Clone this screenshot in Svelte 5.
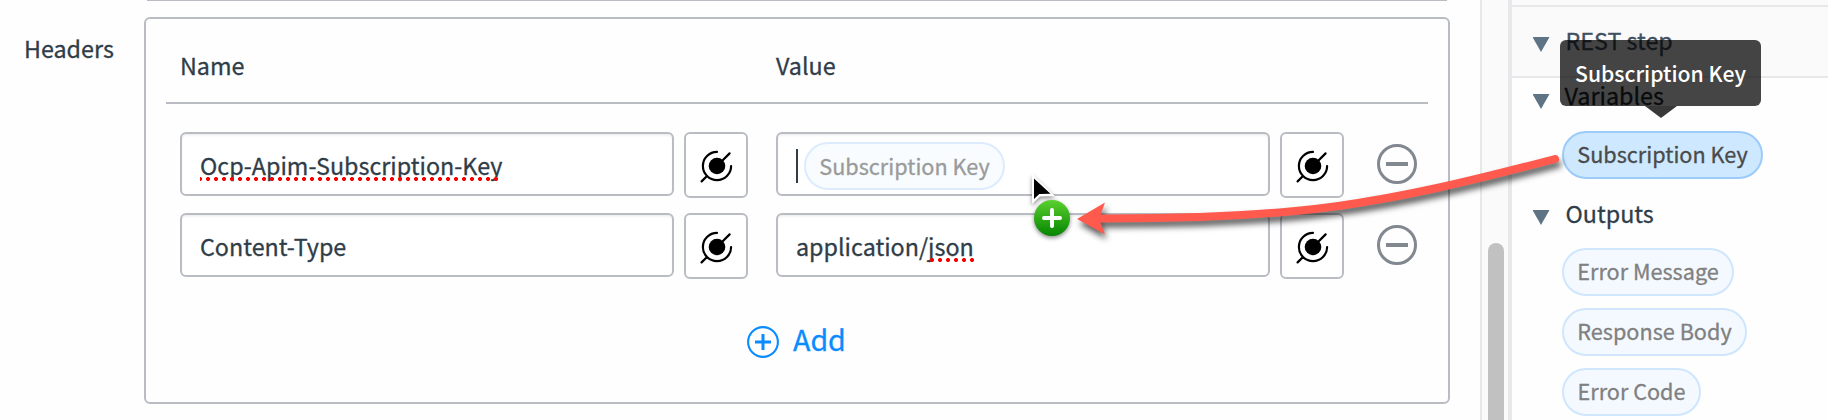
<script>
  const rows = [
    { name: 'Ocp-Apim-Subscription-Key', misspelled: true, token: 'Subscription Key' },
    { name: 'Content-Type', value: 'application/', flagged: 'json' }
  ];
  const outputs = [
    { label: 'Error Message', width: 172 },
    { label: 'Response Body', width: 185 },
    { label: 'Error Code', width: 139 }
  ];
</script>

{#snippet plug()}
  <button class="plug" aria-label="Bind value">
    <svg width="36" height="36" viewBox="0 0 36 36">
      <circle cx="18" cy="18" r="8.3" />
      <path d="M18 3.9A14.1 14.1 0 1 0 32.1 18M18 18L30.6 5.4M8 28L2.6 33.4" fill="none" stroke="#000" stroke-width="2.2" stroke-linecap="round" />
    </svg>
  </button>
{/snippet}

<div class="page">
  <main>
    <div class="label">Headers</div>
    <div class="fields">
      <div class="previous"></div>
      <section class="panel">
        <div class="heads"><span>Name</span><span>Value</span></div>
        {#each rows as row}
          <div class="row">
            <div class="input"><span class:spell={row.misspelled}>{row.name}</span></div>
            {@render plug()}
            <div class="input second">
              {#if row.token}
                <i class="caret"></i><span class="pill ghost">{row.token}</span>
              {:else}
                <span>{row.value}</span><span class="spell short">{row.flagged}</span>
              {/if}
            </div>
            {@render plug()}
            <svg class="minus" width="40" height="40" viewBox="0 0 40 40">
              <circle cx="20" cy="20" r="18.5" fill="none" stroke="#818890" stroke-width="3" />
              <path d="M9 20H31" stroke="#818890" stroke-width="4" />
            </svg>
          </div>
        {/each}
        <div class="add">
          <svg width="32" height="32" viewBox="0 0 32 32" fill="none" stroke="#0a8cff">
            <circle cx="16" cy="16" r="14.9" stroke-width="2.1" />
            <path d="M8 16H24M16 8V24" stroke-width="3" />
          </svg>
          <span>Add</span>
        </div>
      </section>
    </div>
  </main>
  <div class="track"><div class="thumb"></div></div>
  <aside>
    <div class="strip"></div>
    <div class="group step"><i class="tri"></i><span>REST step</span></div>
    <div class="group vars"><i class="tri"></i><span>Variables</span></div>
    <div class="source">
      <span class="pill active">Subscription Key</span>
      <div class="tooltip">Subscription Key</div>
    </div>
    <div class="group outs"><i class="tri"></i><span>Outputs</span></div>
    <div class="list">
      {#each outputs as output}
        <span class="pill" style="width: {output.width}px">{output.label}</span>
      {/each}
    </div>
  </aside>
  <svg class="overlay" width="1828" height="420" viewBox="0 0 1828 420">
    <defs>
      <linearGradient id="green" x1="0" y1="0" x2="0" y2="1">
        <stop offset="0" stop-color="#5bd12f" /><stop offset="1" stop-color="#058500" />
      </linearGradient>
    </defs>
    <g class="arrow">
      <path d="M1098 218.5C1300 219 1380 205 1555 159" fill="none" stroke="#ff5a4d" stroke-width="8" stroke-linecap="round" />
      <path d="M1077 219L1105 202.5L1099 219L1105 234.5Z" fill="#ff5a4d" />
    </g>
    <g class="cursor">
      <path d="M1032 174V204L1040 196.5L1055 196Z" fill="#fff" />
      <path d="M1034 178.5V199L1039.3 194L1050.5 193.7Z" />
      <circle cx="1052" cy="218" r="18" fill="url(#green)" />
      <path d="M1044 218H1060M1052 210V226" stroke="#fff" stroke-width="4" stroke-linecap="round" />
    </g>
  </svg>
</div>

<style>
  :global(body) { margin: 0; background: #fff; overflow: hidden; }
  * { box-sizing: border-box; }
  .page {
    position: relative; display: flex; width: 1828px; height: 420px; overflow: hidden;
    font-family: "Noto Sans CJK SC", sans-serif; font-size: 23.3px; line-height: 30px;
    color: #2f3d48; white-space: nowrap; -webkit-text-stroke: .3px currentColor;
  }
  main { display: flex; width: 1480px; background: #fefefe; }
  .label { width: 144px; padding: 33px 0 0 24px; }
  .fields { width: 1306px; }
  .previous { height: 1px; margin: 0 3px 16px; background: #b9bdc3; }
  .panel { height: 387px; border: 2px solid #b9bdc3; border-radius: 6px; padding: 31px 20px 0; }
  .heads { display: grid; grid-template-columns: 596px 1fr; height: 54px; padding-left: 14px; border-bottom: 2px solid #b9bdc3; margin-bottom: 28px; }
  .row { display: flex; align-items: flex-start; height: 81px; padding-left: 14px; }
  .input {
    display: flex; align-items: center; width: 494px; height: 64px; padding: 2px 0 0 18px;
    border: 2px solid #b9bdc3; border-radius: 6px; background: #fff; box-shadow: inset 0 2px 3px -1px #e8e8e8;
  }
  .second { margin-left: 28px; }
  .spell { position: relative; }
  .spell::after {
    content: ""; position: absolute; left: 0; right: 0; bottom: -1px; height: 4px;
    background: radial-gradient(circle, #f00 1.7px, transparent 2.3px) -4px 0 / 8px 4px repeat-x;
  }
  .short::after { background-position-x: 0; }
  .plug {
    display: grid; place-items: center; width: 64px; height: 66px; margin-left: 10px; padding: 1px 0 0 1px;
    border: 2px solid #b9bdc3; border-radius: 6px; background: #fff;
  }
  .plug svg { display: block; }
  .minus { margin: 12px 0 0 33px; }
  .caret { width: 2px; height: 34px; margin-top: 2px; background: #2f3d48; }
  .pill {
    display: flex; align-items: center; justify-content: center; width: 201px; height: 48px; padding-bottom: 2px;
    border: 2px solid #cfe6fd; border-radius: 24px; background: #f4f9ff; color: #808080; font-size: 21.65px;
  }
  .ghost { margin: 2px 0 0 6px; padding-bottom: 1px; background: #f8fcff; border-color: #dcebfd; color: #9a9a9a; }
  .active { background: #cde8ff; border-color: #9ccbfa; color: #4a4a4a; }
  .add { display: flex; align-items: center; height: 38px; margin: 28px 0 0 581px; color: #0a8cff; font-size: 28.6px; }
  .add svg { margin-top: 1px; }
  .add span { margin: 0 0 5px 14px; }
  .track { width: 32px; padding: 243px 4px 0 6px; border: solid #e8e8ea; border-width: 0 4px 0 2px; background: #fafafa; }
  .thumb { width: 16px; height: 200px; border-radius: 8px; background: #c1c1c1; }
  aside { width: 316px; background: #fefefe; }
  .strip { height: 7px; border-bottom: 2px solid #e8e8ea; background: #fafafa; }
  .group { display: flex; align-items: flex-start; padding-left: 20.5px; }
  .tri { width: 17px; height: 15px; margin: 12px 16px 0 0; background: #5e7384; clip-path: polygon(0 0, 100% 0, 50% 100%); }
  .step { height: 71px; padding-top: 18px; border-bottom: 2px solid #e8e8ea; background: #fafafa; color: #3f5060; }
  .vars { height: 53px; padding-top: 2px; color: #1f2a33; }
  .vars .tri { margin: 14px 15px 0 0; }
  .source { position: relative; padding-left: 50px; }
  .tooltip {
    position: absolute; left: 48px; top: -91px; width: 201px; height: 66px; border-radius: 6px;
    background: rgba(0, 0, 0, .73); color: #fff; font-size: 21.2px; font-weight: 500; line-height: 66px; text-align: center;
    -webkit-text-stroke: 0;
  }
  .tooltip::after {
    content: ""; position: absolute; left: 85px; top: 66px; width: 32px; height: 12px;
    background: #383838; clip-path: polygon(0 0, 100% 0, 50% 100%);
  }
  .outs { height: 69px; padding-top: 19px; }
  .list { display: grid; gap: 12px; padding-left: 50px; }
  .overlay { position: absolute; inset: 0; pointer-events: none; }
  .arrow { filter: drop-shadow(2px 5px 3px rgba(0, 0, 0, .65)); }
  .cursor { filter: drop-shadow(0 2px 2px rgba(0, 0, 0, .45)); }
</style>
